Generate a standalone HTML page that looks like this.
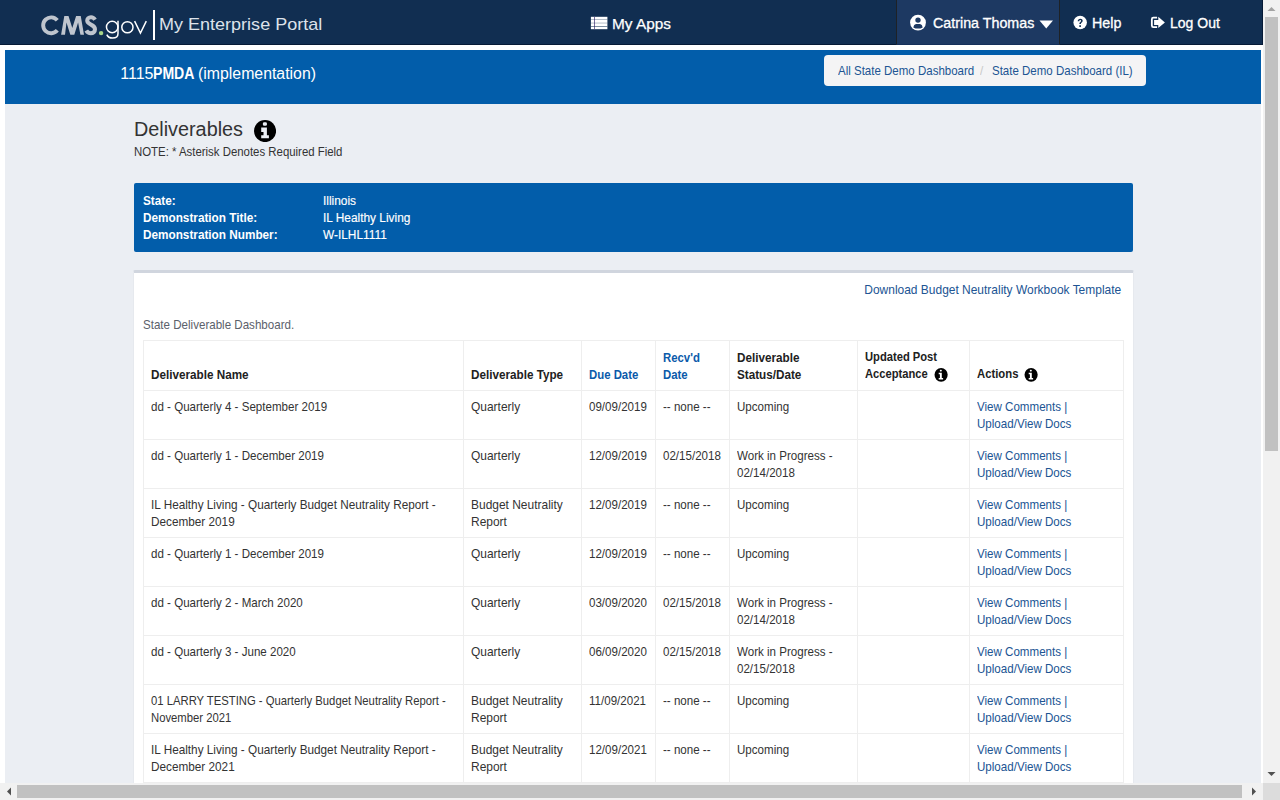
<!DOCTYPE html>
<html><head><meta charset="utf-8">
<style>
html,body{margin:0;padding:0;width:1280px;height:800px;overflow:hidden;background:#fff;font-family:"Liberation Sans", sans-serif;}
.t{position:absolute;white-space:nowrap;}
.b{position:absolute;box-sizing:border-box;}
svg{position:absolute;}
</style></head><body>

<div class="b" style="left:0px;top:0px;width:1263px;height:45px;background:#112e51;border-right:1px solid #061a36;border-bottom:1px solid #061a36;"></div>
<div class="b" style="left:896px;top:0px;width:164px;height:45px;background:#1d3962;border-left:1px solid #1e2226;border-right:1px solid #1e2226;border-bottom:1px solid #15305a;"></div>
<svg style="left:0;top:0" width="160" height="45" viewBox="0 0 160 45"><path d="M57.3 20.3 A7.95 7.95 0 1 0 57.3 30.3" fill="none" stroke="#bfc5ce" stroke-width="3.9"/><path d="M61.1 34.75 L64.3 16.1 L68.5 16.1 L72.3 28.0 L76.1 16.1 L80.75 16.1 L84.0 34.75 L80.4 34.75 L78.1 22.6 L74.3 34.75 L70.3 34.75 L66.5 22.6 L65.0 34.75 Z" fill="#bfc5ce"/><path d="M95.0 19.8 C94.0 18.0 92.6 17.3 91.0 17.3 C88.6 17.3 87.2 18.8 87.2 20.6 C87.2 25.2 95.0 24.0 95.0 29.2 C95.0 31.8 93.2 33.3 90.8 33.3 C88.8 33.3 87.3 32.3 86.3 30.5" fill="none" stroke="#bfc5ce" stroke-width="4.0"/><circle cx="101.1" cy="33.1" r="2.2" fill="#a9d68a"/><circle cx="112.2" cy="27" r="5.75" fill="none" stroke="#fff" stroke-width="1.5"/><path d="M118.0 20.8 L118.0 33.5 C118.0 36.6 115.8 38.1 112.5 38.1 C110.0 38.1 107.8 36.9 106.8 34.6" fill="none" stroke="#fff" stroke-width="1.5"/><circle cx="127.4" cy="27.25" r="5.6" fill="none" stroke="#fff" stroke-width="1.5"/><path d="M134.6 21.2 L140.45 33.0 L146.3 21.2" fill="none" stroke="#fff" stroke-width="1.5"/></svg>
<div class="b" style="left:153.3px;top:9.6px;width:2.2px;height:30.6px;background:#ffffff;"></div>
<div class="t" style="left:159px;top:13.51px;font-size:17px;line-height:22px;font-weight:400;color:#dde2ea;transform:scaleX(1.06);transform-origin:0 0;">My Enterprise Portal</div>
<svg style="left:586px;top:10px" width="28" height="26" viewBox="0 0 28 26"><rect x="4.9" y="6.8" width="16.5" height="12.4" fill="#fff"/><rect x="8" y="6.8" width="1" height="12.4" fill="#5a4a8a" opacity="0.8"/><rect x="4.9" y="9.1" width="16.5" height="0.9" fill="#112e51" opacity="0.35"/><rect x="4.9" y="12.6" width="16.5" height="0.9" fill="#112e51" opacity="0.35"/><rect x="4.9" y="16.0" width="16.5" height="0.9" fill="#112e51" opacity="0.6"/></svg>
<div class="t" style="left:612px;top:13.80px;font-size:15px;line-height:20px;font-weight:400;color:#ffffff;transform:scaleX(1.025);transform-origin:0 0;-webkit-text-stroke:0.25px #fff;">My Apps</div>
<svg style="left:900px;top:8px" width="28" height="28" viewBox="0 0 28 28"><circle cx="18" cy="14.6" r="7.9" fill="#fff"/><circle cx="18" cy="12.1" r="2.7" fill="#1d3962"/><path d="M13.3 19.4 Q13.7 16.6 16 16.1 L20 16.1 Q22.3 16.6 22.7 19.4 Q20.7 20.6 18 20.6 Q15.3 20.6 13.3 19.4 Z" fill="#1d3962"/></svg>
<div class="t" style="left:933px;top:13.95px;font-size:14px;line-height:18px;font-weight:400;color:#ffffff;transform:scaleX(1.02);transform-origin:0 0;-webkit-text-stroke:0.3px #fff;">Catrina Thomas</div>
<svg style="left:1039px;top:20px" width="15" height="9" viewBox="0 0 15 9"><path d="M0.5 0.5 L14 0.5 L7.25 8.5 Z" fill="#fff"/></svg>
<svg style="left:1068px;top:10px" width="24" height="24" viewBox="0 0 24 24"><circle cx="12.15" cy="12.5" r="6.75" fill="#fff"/><path d="M9.7 11.2 C9.7 9.6 10.9 8.7 12.3 8.7 C13.7 8.7 14.7 9.5 14.7 10.8 C14.7 12.3 12.9 12.6 12.9 13.9 L11.3 13.9 C11.3 12 13.1 11.9 13.1 10.9 C13.1 10.4 12.8 10.1 12.2 10.1 C11.6 10.1 11.3 10.5 11.3 11.2 Z" fill="#112e51"/><rect x="11.3" y="15.2" width="1.6" height="1.8" fill="#112e51"/></svg>
<div class="t" style="left:1092px;top:13.85px;font-size:14px;line-height:18px;font-weight:400;color:#ffffff;transform:scaleX(1.02);transform-origin:0 0;-webkit-text-stroke:0.3px #fff;">Help</div>
<svg style="left:1146px;top:10px" width="24" height="24" viewBox="0 0 24 24"><path d="M11.1 7.65 L7.4 7.65 Q5.85 7.65 5.85 9.2 L5.85 15.5 Q5.85 17.1 7.4 17.1 L11.1 17.1" fill="none" stroke="#fff" stroke-width="1.8"/><path d="M8.1 9.9 L12.3 9.9 L12.3 6.75 L18.9 12.4 L12.3 18 L12.3 15 L8.1 15 Z" fill="#fff"/></svg>
<div class="t" style="left:1170px;top:13.85px;font-size:14px;line-height:18px;font-weight:400;color:#ffffff;-webkit-text-stroke:0.3px #fff;">Log Out</div>
<div class="b" style="left:5px;top:104px;width:1256px;height:679px;background:#ebeef3;"></div>
<div class="b" style="left:5px;top:50px;width:1256px;height:54px;background:#025daa;"></div>
<div class="t" style="left:120.3px;top:62.96px;font-size:16px;line-height:21px;font-weight:400;color:#ffffff;">1115</div>
<div class="t" style="left:153px;top:62.96px;font-size:16px;line-height:21px;font-weight:700;color:#ffffff;transform:scaleX(0.88);transform-origin:0 0;">PMDA</div>
<div class="t" style="left:197.5px;top:62.96px;font-size:16px;line-height:21px;font-weight:400;color:#ffffff;transform:scaleX(0.99);transform-origin:0 0;">(implementation)</div>
<div class="b" style="left:824px;top:55px;width:322px;height:31px;background:#f4f4f5;border-radius:4px;"></div>
<div class="t" style="left:837.5px;top:62.20px;font-size:13px;line-height:17px;font-weight:400;color:#205493;transform:scaleX(0.885);transform-origin:0 0;">All State Demo Dashboard</div>
<div class="t" style="left:980px;top:62.20px;font-size:13px;line-height:17px;font-weight:400;color:#c8c8c8;transform:scaleX(0.9);transform-origin:0 0;">/</div>
<div class="t" style="left:991.5px;top:62.20px;font-size:13px;line-height:17px;font-weight:400;color:#205493;transform:scaleX(0.885);transform-origin:0 0;">State Demo Dashboard (IL)</div>
<div class="t" style="left:134px;top:115.87px;font-size:20px;line-height:26px;font-weight:400;color:#333333;transform:scaleX(0.99);transform-origin:0 0;">Deliverables</div>
<svg style="left:254px;top:120px" width="22" height="22" viewBox="0 0 22 22"><circle cx="11.05" cy="11.05" r="11.05" fill="#000"/><rect x="8.9" y="2.3" width="4" height="3.4" rx="1.3" fill="#ebeef3"/><path d="M7.2 7.6 L12.9 7.6 L12.9 15.3 L14.9 15.3 L14.9 18.3 L7.2 18.3 L7.2 15.3 L9.5 15.3 L9.5 11.9 L7.2 11.9 Z" fill="#ebeef3"/></svg>
<div class="t" style="left:134px;top:143.64px;font-size:12px;line-height:16px;font-weight:400;color:#333333;transform:scaleX(0.95);transform-origin:0 0;">NOTE: * Asterisk Denotes Required Field</div>
<div class="b" style="left:134px;top:183px;width:999px;height:69px;background:#025daa;border-radius:2px;"></div>
<div class="t" style="left:143px;top:192.84px;font-size:12px;line-height:16px;font-weight:700;color:#fff;transform:scaleX(0.98);transform-origin:0 0;">State:</div>
<div class="t" style="left:322.5px;top:192.84px;font-size:12px;line-height:16px;font-weight:400;color:#fff;transform:scaleX(0.99);transform-origin:0 0;-webkit-text-stroke:0.15px #fff;">Illinois</div>
<div class="t" style="left:143px;top:209.94px;font-size:12px;line-height:16px;font-weight:700;color:#fff;transform:scaleX(0.98);transform-origin:0 0;">Demonstration Title:</div>
<div class="t" style="left:322.5px;top:209.94px;font-size:12px;line-height:16px;font-weight:400;color:#fff;transform:scaleX(0.99);transform-origin:0 0;-webkit-text-stroke:0.15px #fff;">IL Healthy Living</div>
<div class="t" style="left:143px;top:227.04px;font-size:12px;line-height:16px;font-weight:700;color:#fff;transform:scaleX(0.98);transform-origin:0 0;">Demonstration Number:</div>
<div class="t" style="left:322.5px;top:227.04px;font-size:12px;line-height:16px;font-weight:400;color:#fff;transform:scaleX(0.99);transform-origin:0 0;-webkit-text-stroke:0.15px #fff;">W-ILHL1111</div>
<div class="b" style="left:133px;top:270px;width:1001px;height:530px;background:#fff;border-top:3px solid #d0d5de;border-left:1px solid #e6e9ee;border-right:1px solid #e6e9ee;border-radius:2px 2px 0 0;"></div>
<div class="t" style="right:158.5px;top:280.7px;font-size:13px;line-height:17px;color:#205493;transform:scaleX(0.92);transform-origin:100% 0;">Download Budget Neutrality Workbook Template</div>
<div class="t" style="left:143px;top:316.20px;font-size:13px;line-height:17px;font-weight:400;color:#5b616b;transform:scaleX(0.89);transform-origin:0 0;">State Deliverable Dashboard.</div>
<div class="b" style="left:143px;top:340px;width:981px;height:1px;background:#eeeeee;"></div>
<div class="b" style="left:143px;top:390px;width:981px;height:1px;background:#eeeeee;"></div>
<div class="b" style="left:143px;top:439px;width:981px;height:1px;background:#eeeeee;"></div>
<div class="b" style="left:143px;top:488px;width:981px;height:1px;background:#eeeeee;"></div>
<div class="b" style="left:143px;top:537px;width:981px;height:1px;background:#eeeeee;"></div>
<div class="b" style="left:143px;top:586px;width:981px;height:1px;background:#eeeeee;"></div>
<div class="b" style="left:143px;top:635px;width:981px;height:1px;background:#eeeeee;"></div>
<div class="b" style="left:143px;top:684px;width:981px;height:1px;background:#eeeeee;"></div>
<div class="b" style="left:143px;top:733px;width:981px;height:1px;background:#eeeeee;"></div>
<div class="b" style="left:143px;top:782px;width:981px;height:1px;background:#eeeeee;"></div>
<div class="b" style="left:143px;top:831px;width:981px;height:1px;background:#eeeeee;"></div>
<div class="b" style="left:143px;top:340px;width:1px;height:460px;background:#eeeeee;"></div>
<div class="b" style="left:463px;top:340px;width:1px;height:460px;background:#eeeeee;"></div>
<div class="b" style="left:581px;top:340px;width:1px;height:460px;background:#eeeeee;"></div>
<div class="b" style="left:655px;top:340px;width:1px;height:460px;background:#eeeeee;"></div>
<div class="b" style="left:729px;top:340px;width:1px;height:460px;background:#eeeeee;"></div>
<div class="b" style="left:857px;top:340px;width:1px;height:460px;background:#eeeeee;"></div>
<div class="b" style="left:969px;top:340px;width:1px;height:460px;background:#eeeeee;"></div>
<div class="b" style="left:1123px;top:340px;width:1px;height:460px;background:#eeeeee;"></div>
<div class="t" style="left:151px;top:366.30px;font-size:13px;line-height:17px;font-weight:700;color:#212121;transform:scaleX(0.9);transform-origin:0 0;">Deliverable Name</div>
<div class="t" style="left:471px;top:366.30px;font-size:13px;line-height:17px;font-weight:700;color:#212121;transform:scaleX(0.9);transform-origin:0 0;">Deliverable Type</div>
<div class="t" style="left:589px;top:366.30px;font-size:13px;line-height:17px;font-weight:700;color:#0b5aaa;transform:scaleX(0.875);transform-origin:0 0;">Due Date</div>
<div class="t" style="left:663px;top:349.30px;font-size:13px;line-height:17px;font-weight:700;color:#0b5aaa;transform:scaleX(0.875);transform-origin:0 0;">Recv'd</div>
<div class="t" style="left:663px;top:366.30px;font-size:13px;line-height:17px;font-weight:700;color:#0b5aaa;transform:scaleX(0.875);transform-origin:0 0;">Date</div>
<div class="t" style="left:737px;top:349.30px;font-size:13px;line-height:17px;font-weight:700;color:#212121;transform:scaleX(0.9);transform-origin:0 0;">Deliverable</div>
<div class="t" style="left:737px;top:366.30px;font-size:13px;line-height:17px;font-weight:700;color:#212121;transform:scaleX(0.9);transform-origin:0 0;">Status/Date</div>
<div class="t" style="left:865px;top:347.70px;font-size:13px;line-height:17px;font-weight:700;color:#212121;transform:scaleX(0.86);transform-origin:0 0;">Updated Post</div>
<div class="t" style="left:865px;top:364.70px;font-size:13px;line-height:17px;font-weight:700;color:#212121;transform:scaleX(0.86);transform-origin:0 0;">Acceptance</div>
<div class="t" style="left:977px;top:364.70px;font-size:13px;line-height:17px;font-weight:700;color:#212121;transform:scaleX(0.87);transform-origin:0 0;">Actions</div>
<svg style="left:934.1px;top:368px" width="14" height="14" viewBox="0 0 14 14"><ellipse cx="7.1" cy="6.85" rx="6.6" ry="6.8" fill="#000"/><rect x="5.85" y="1.8" width="1.95" height="1.7" rx="0.7" fill="#fff"/><path d="M4.7 4.7 L7.8 4.7 L7.8 9.9 L9.1 9.9 L9.1 11.4 L4.7 11.4 L4.7 9.9 L5.9 9.9 L5.9 6.2 L4.7 6.2 Z" fill="#fff"/></svg>
<svg style="left:1024.0px;top:368px" width="14" height="14" viewBox="0 0 14 14"><ellipse cx="7.1" cy="6.85" rx="6.6" ry="6.8" fill="#000"/><rect x="5.85" y="1.8" width="1.95" height="1.7" rx="0.7" fill="#fff"/><path d="M4.7 4.7 L7.8 4.7 L7.8 9.9 L9.1 9.9 L9.1 11.4 L4.7 11.4 L4.7 9.9 L5.9 9.9 L5.9 6.2 L4.7 6.2 Z" fill="#fff"/></svg>
<div class="t" style="left:151px;top:398.00px;font-size:13px;line-height:17px;font-weight:400;color:#333333;transform:scaleX(0.89);transform-origin:0 0;">dd - Quarterly 4 - September 2019</div>
<div class="t" style="left:471px;top:398.00px;font-size:13px;line-height:17px;font-weight:400;color:#333333;transform:scaleX(0.92);transform-origin:0 0;">Quarterly</div>
<div class="t" style="left:589px;top:398.00px;font-size:13px;line-height:17px;font-weight:400;color:#333333;transform:scaleX(0.89);transform-origin:0 0;">09/09/2019</div>
<div class="t" style="left:663px;top:398.00px;font-size:13px;line-height:17px;font-weight:400;color:#333333;transform:scaleX(0.89);transform-origin:0 0;">-- none --</div>
<div class="t" style="left:737px;top:398.00px;font-size:13px;line-height:17px;font-weight:400;color:#333333;transform:scaleX(0.89);transform-origin:0 0;">Upcoming</div>
<div class="t" style="left:977px;top:398.00px;font-size:13px;line-height:17px;font-weight:400;color:#205493;transform:scaleX(0.89);transform-origin:0 0;">View Comments |</div>
<div class="t" style="left:977px;top:415.00px;font-size:13px;line-height:17px;font-weight:400;color:#205493;transform:scaleX(0.89);transform-origin:0 0;">Upload/View Docs</div>
<div class="t" style="left:151px;top:447.00px;font-size:13px;line-height:17px;font-weight:400;color:#333333;transform:scaleX(0.89);transform-origin:0 0;">dd - Quarterly 1 - December 2019</div>
<div class="t" style="left:471px;top:447.00px;font-size:13px;line-height:17px;font-weight:400;color:#333333;transform:scaleX(0.92);transform-origin:0 0;">Quarterly</div>
<div class="t" style="left:589px;top:447.00px;font-size:13px;line-height:17px;font-weight:400;color:#333333;transform:scaleX(0.89);transform-origin:0 0;">12/09/2019</div>
<div class="t" style="left:663px;top:447.00px;font-size:13px;line-height:17px;font-weight:400;color:#333333;transform:scaleX(0.89);transform-origin:0 0;">02/15/2018</div>
<div class="t" style="left:737px;top:447.00px;font-size:13px;line-height:17px;font-weight:400;color:#333333;transform:scaleX(0.89);transform-origin:0 0;">Work in Progress -</div>
<div class="t" style="left:737px;top:464.00px;font-size:13px;line-height:17px;font-weight:400;color:#333333;transform:scaleX(0.89);transform-origin:0 0;">02/14/2018</div>
<div class="t" style="left:977px;top:447.00px;font-size:13px;line-height:17px;font-weight:400;color:#205493;transform:scaleX(0.89);transform-origin:0 0;">View Comments |</div>
<div class="t" style="left:977px;top:464.00px;font-size:13px;line-height:17px;font-weight:400;color:#205493;transform:scaleX(0.89);transform-origin:0 0;">Upload/View Docs</div>
<div class="t" style="left:151px;top:496.00px;font-size:13px;line-height:17px;font-weight:400;color:#333333;transform:scaleX(0.905);transform-origin:0 0;">IL Healthy Living - Quarterly Budget Neutrality Report -</div>
<div class="t" style="left:151px;top:513.00px;font-size:13px;line-height:17px;font-weight:400;color:#333333;transform:scaleX(0.905);transform-origin:0 0;">December 2019</div>
<div class="t" style="left:471px;top:496.00px;font-size:13px;line-height:17px;font-weight:400;color:#333333;transform:scaleX(0.92);transform-origin:0 0;">Budget Neutrality</div>
<div class="t" style="left:471px;top:513.00px;font-size:13px;line-height:17px;font-weight:400;color:#333333;transform:scaleX(0.92);transform-origin:0 0;">Report</div>
<div class="t" style="left:589px;top:496.00px;font-size:13px;line-height:17px;font-weight:400;color:#333333;transform:scaleX(0.89);transform-origin:0 0;">12/09/2019</div>
<div class="t" style="left:663px;top:496.00px;font-size:13px;line-height:17px;font-weight:400;color:#333333;transform:scaleX(0.89);transform-origin:0 0;">-- none --</div>
<div class="t" style="left:737px;top:496.00px;font-size:13px;line-height:17px;font-weight:400;color:#333333;transform:scaleX(0.89);transform-origin:0 0;">Upcoming</div>
<div class="t" style="left:977px;top:496.00px;font-size:13px;line-height:17px;font-weight:400;color:#205493;transform:scaleX(0.89);transform-origin:0 0;">View Comments |</div>
<div class="t" style="left:977px;top:513.00px;font-size:13px;line-height:17px;font-weight:400;color:#205493;transform:scaleX(0.89);transform-origin:0 0;">Upload/View Docs</div>
<div class="t" style="left:151px;top:545.00px;font-size:13px;line-height:17px;font-weight:400;color:#333333;transform:scaleX(0.89);transform-origin:0 0;">dd - Quarterly 1 - December 2019</div>
<div class="t" style="left:471px;top:545.00px;font-size:13px;line-height:17px;font-weight:400;color:#333333;transform:scaleX(0.92);transform-origin:0 0;">Quarterly</div>
<div class="t" style="left:589px;top:545.00px;font-size:13px;line-height:17px;font-weight:400;color:#333333;transform:scaleX(0.89);transform-origin:0 0;">12/09/2019</div>
<div class="t" style="left:663px;top:545.00px;font-size:13px;line-height:17px;font-weight:400;color:#333333;transform:scaleX(0.89);transform-origin:0 0;">-- none --</div>
<div class="t" style="left:737px;top:545.00px;font-size:13px;line-height:17px;font-weight:400;color:#333333;transform:scaleX(0.89);transform-origin:0 0;">Upcoming</div>
<div class="t" style="left:977px;top:545.00px;font-size:13px;line-height:17px;font-weight:400;color:#205493;transform:scaleX(0.89);transform-origin:0 0;">View Comments |</div>
<div class="t" style="left:977px;top:562.00px;font-size:13px;line-height:17px;font-weight:400;color:#205493;transform:scaleX(0.89);transform-origin:0 0;">Upload/View Docs</div>
<div class="t" style="left:151px;top:594.00px;font-size:13px;line-height:17px;font-weight:400;color:#333333;transform:scaleX(0.89);transform-origin:0 0;">dd - Quarterly 2 - March 2020</div>
<div class="t" style="left:471px;top:594.00px;font-size:13px;line-height:17px;font-weight:400;color:#333333;transform:scaleX(0.92);transform-origin:0 0;">Quarterly</div>
<div class="t" style="left:589px;top:594.00px;font-size:13px;line-height:17px;font-weight:400;color:#333333;transform:scaleX(0.89);transform-origin:0 0;">03/09/2020</div>
<div class="t" style="left:663px;top:594.00px;font-size:13px;line-height:17px;font-weight:400;color:#333333;transform:scaleX(0.89);transform-origin:0 0;">02/15/2018</div>
<div class="t" style="left:737px;top:594.00px;font-size:13px;line-height:17px;font-weight:400;color:#333333;transform:scaleX(0.89);transform-origin:0 0;">Work in Progress -</div>
<div class="t" style="left:737px;top:611.00px;font-size:13px;line-height:17px;font-weight:400;color:#333333;transform:scaleX(0.89);transform-origin:0 0;">02/14/2018</div>
<div class="t" style="left:977px;top:594.00px;font-size:13px;line-height:17px;font-weight:400;color:#205493;transform:scaleX(0.89);transform-origin:0 0;">View Comments |</div>
<div class="t" style="left:977px;top:611.00px;font-size:13px;line-height:17px;font-weight:400;color:#205493;transform:scaleX(0.89);transform-origin:0 0;">Upload/View Docs</div>
<div class="t" style="left:151px;top:643.00px;font-size:13px;line-height:17px;font-weight:400;color:#333333;transform:scaleX(0.89);transform-origin:0 0;">dd - Quarterly 3 - June 2020</div>
<div class="t" style="left:471px;top:643.00px;font-size:13px;line-height:17px;font-weight:400;color:#333333;transform:scaleX(0.92);transform-origin:0 0;">Quarterly</div>
<div class="t" style="left:589px;top:643.00px;font-size:13px;line-height:17px;font-weight:400;color:#333333;transform:scaleX(0.89);transform-origin:0 0;">06/09/2020</div>
<div class="t" style="left:663px;top:643.00px;font-size:13px;line-height:17px;font-weight:400;color:#333333;transform:scaleX(0.89);transform-origin:0 0;">02/15/2018</div>
<div class="t" style="left:737px;top:643.00px;font-size:13px;line-height:17px;font-weight:400;color:#333333;transform:scaleX(0.89);transform-origin:0 0;">Work in Progress -</div>
<div class="t" style="left:737px;top:660.00px;font-size:13px;line-height:17px;font-weight:400;color:#333333;transform:scaleX(0.89);transform-origin:0 0;">02/15/2018</div>
<div class="t" style="left:977px;top:643.00px;font-size:13px;line-height:17px;font-weight:400;color:#205493;transform:scaleX(0.89);transform-origin:0 0;">View Comments |</div>
<div class="t" style="left:977px;top:660.00px;font-size:13px;line-height:17px;font-weight:400;color:#205493;transform:scaleX(0.89);transform-origin:0 0;">Upload/View Docs</div>
<div class="t" style="left:151px;top:692.00px;font-size:13px;line-height:17px;font-weight:400;color:#333333;transform:scaleX(0.868);transform-origin:0 0;">01 LARRY TESTING - Quarterly Budget Neutrality Report -</div>
<div class="t" style="left:151px;top:709.00px;font-size:13px;line-height:17px;font-weight:400;color:#333333;transform:scaleX(0.868);transform-origin:0 0;">November 2021</div>
<div class="t" style="left:471px;top:692.00px;font-size:13px;line-height:17px;font-weight:400;color:#333333;transform:scaleX(0.92);transform-origin:0 0;">Budget Neutrality</div>
<div class="t" style="left:471px;top:709.00px;font-size:13px;line-height:17px;font-weight:400;color:#333333;transform:scaleX(0.92);transform-origin:0 0;">Report</div>
<div class="t" style="left:589px;top:692.00px;font-size:13px;line-height:17px;font-weight:400;color:#333333;transform:scaleX(0.89);transform-origin:0 0;">11/09/2021</div>
<div class="t" style="left:663px;top:692.00px;font-size:13px;line-height:17px;font-weight:400;color:#333333;transform:scaleX(0.89);transform-origin:0 0;">-- none --</div>
<div class="t" style="left:737px;top:692.00px;font-size:13px;line-height:17px;font-weight:400;color:#333333;transform:scaleX(0.89);transform-origin:0 0;">Upcoming</div>
<div class="t" style="left:977px;top:692.00px;font-size:13px;line-height:17px;font-weight:400;color:#205493;transform:scaleX(0.89);transform-origin:0 0;">View Comments |</div>
<div class="t" style="left:977px;top:709.00px;font-size:13px;line-height:17px;font-weight:400;color:#205493;transform:scaleX(0.89);transform-origin:0 0;">Upload/View Docs</div>
<div class="t" style="left:151px;top:741.00px;font-size:13px;line-height:17px;font-weight:400;color:#333333;transform:scaleX(0.905);transform-origin:0 0;">IL Healthy Living - Quarterly Budget Neutrality Report -</div>
<div class="t" style="left:151px;top:758.00px;font-size:13px;line-height:17px;font-weight:400;color:#333333;transform:scaleX(0.905);transform-origin:0 0;">December 2021</div>
<div class="t" style="left:471px;top:741.00px;font-size:13px;line-height:17px;font-weight:400;color:#333333;transform:scaleX(0.92);transform-origin:0 0;">Budget Neutrality</div>
<div class="t" style="left:471px;top:758.00px;font-size:13px;line-height:17px;font-weight:400;color:#333333;transform:scaleX(0.92);transform-origin:0 0;">Report</div>
<div class="t" style="left:589px;top:741.00px;font-size:13px;line-height:17px;font-weight:400;color:#333333;transform:scaleX(0.89);transform-origin:0 0;">12/09/2021</div>
<div class="t" style="left:663px;top:741.00px;font-size:13px;line-height:17px;font-weight:400;color:#333333;transform:scaleX(0.89);transform-origin:0 0;">-- none --</div>
<div class="t" style="left:737px;top:741.00px;font-size:13px;line-height:17px;font-weight:400;color:#333333;transform:scaleX(0.89);transform-origin:0 0;">Upcoming</div>
<div class="t" style="left:977px;top:741.00px;font-size:13px;line-height:17px;font-weight:400;color:#205493;transform:scaleX(0.89);transform-origin:0 0;">View Comments |</div>
<div class="t" style="left:977px;top:758.00px;font-size:13px;line-height:17px;font-weight:400;color:#205493;transform:scaleX(0.89);transform-origin:0 0;">Upload/View Docs</div>
<div class="t" style="left:151px;top:790.00px;font-size:13px;line-height:17px;font-weight:400;color:#333333;transform:scaleX(0.89);transform-origin:0 0;">dd - Quarterly 4 - September 2021</div>
<div class="t" style="left:471px;top:790.00px;font-size:13px;line-height:17px;font-weight:400;color:#333333;transform:scaleX(0.92);transform-origin:0 0;">Quarterly</div>
<div class="t" style="left:589px;top:790.00px;font-size:13px;line-height:17px;font-weight:400;color:#333333;transform:scaleX(0.89);transform-origin:0 0;">12/09/2021</div>
<div class="t" style="left:663px;top:790.00px;font-size:13px;line-height:17px;font-weight:400;color:#333333;transform:scaleX(0.89);transform-origin:0 0;">-- none --</div>
<div class="t" style="left:737px;top:790.00px;font-size:13px;line-height:17px;font-weight:400;color:#333333;transform:scaleX(0.89);transform-origin:0 0;">Upcoming</div>
<div class="t" style="left:977px;top:790.00px;font-size:13px;line-height:17px;font-weight:400;color:#205493;transform:scaleX(0.89);transform-origin:0 0;">View Comments |</div>
<div class="t" style="left:977px;top:807.00px;font-size:13px;line-height:17px;font-weight:400;color:#205493;transform:scaleX(0.89);transform-origin:0 0;">Upload/View Docs</div>
<div class="b" style="left:1263px;top:0px;width:17px;height:783px;background:#f1f1f1;"></div>
<div class="b" style="left:0px;top:783px;width:1263px;height:17px;background:#f1f1f1;"></div>
<div class="b" style="left:1263px;top:783px;width:17px;height:17px;background:#dcdcdc;"></div>
<div class="b" style="left:1265px;top:17px;width:13px;height:434px;background:#c1c1c1;"></div>
<div class="b" style="left:17px;top:785px;width:1225px;height:13px;background:#c1c1c1;"></div>
<svg style="left:1263px;top:0" width="17" height="17" viewBox="0 0 17 17"><path d="M4.5 11 L8.5 7 L12.5 11 Z" fill="#a3a3a3"/></svg>
<svg style="left:1263px;top:766px" width="17" height="17" viewBox="0 0 17 17"><path d="M4.5 6 L8.5 10 L12.5 6 Z" fill="#505050"/></svg>
<svg style="left:0;top:783px" width="17" height="17" viewBox="0 0 17 17"><path d="M11 4.5 L7 8.5 L11 12.5 Z" fill="#505050"/></svg>
<svg style="left:1246px;top:783px" width="17" height="17" viewBox="0 0 17 17"><path d="M6 4.5 L10 8.5 L6 12.5 Z" fill="#505050"/></svg>
</body></html>
